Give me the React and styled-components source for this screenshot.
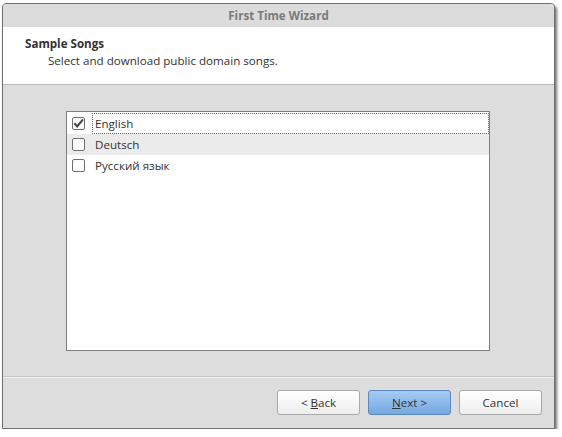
import React, { useState } from "react";
import styled, { createGlobalStyle } from "styled-components";

const Global = createGlobalStyle`
  body {
    margin: 0;
    background: #ffffff;
    font-family: "Open Sans", "DejaVu Sans", sans-serif;
  }
`;

const Window = styled.div`
  margin: 3px 0 0 2px;
  width: 553px;
  height: 426px;
  box-sizing: border-box;
  border: 1px solid #6f6f6f;
  border-radius: 4px 4px 0 0;
  box-shadow: 2px 3px 3px rgba(0, 0, 0, 0.55);
  background: #dddddd;
  display: flex;
  flex-direction: column;
  overflow: hidden;
`;

const TitleBar = styled.div`
  height: 23px;
  flex-shrink: 0;
  background: #dcdcdc;
  display: flex;
  align-items: center;
  justify-content: center;
  color: #7a7a7a;
  font-weight: bold;
  font-size: 11.6px;
`;

const Header = styled.div`
  height: 58px;
  flex-shrink: 0;
  background: #ffffff;
  border-bottom: 1px solid #b9b9b9;
  padding: 9px 0 0 22px;
  box-sizing: border-box;
  color: #333;
  font-size: 11.6px;
`;

const HeaderTitle = styled.div`
  font-weight: bold;
  line-height: 16px;
`;

const HeaderSub = styled.div`
  padding-left: 23px;
  line-height: 17px;
`;

const Body = styled.div`
  flex: 1;
  padding: 26px 64px 25px 63px;
  border-bottom: 1px solid #c6c6c6;
  box-shadow: 0 1px 0 #f2f2f2;
  display: flex;
`;

const ListBox = styled.div`
  flex: 1;
  background: #ffffff;
  border: 1px solid #7f7f7f;
  padding-top: 1px;
`;

const Row = styled.div`
  height: 21px;
  display: flex;
  align-items: center;
  background: ${(p) => (p.$alt ? "#ebebeb" : "#ffffff")};
  font-size: 11.6px;
  color: #333;
`;

const Box = styled.span`
  width: 13px;
  height: 13px;
  margin: 0 7px 0 5px;
  box-sizing: border-box;
  border: 1px solid #6f6f6f;
  border-radius: 2px;
  background: #fff;
  display: flex;
  align-items: center;
  justify-content: center;
  flex-shrink: 0;
`;

const Label = styled.span`
  flex: 1;
  height: 100%;
  display: flex;
  align-items: center;
  padding-left: 2px;
  box-sizing: border-box;
  border: 1px dotted ${(p) => (p.$focus ? "#666" : "transparent")};
`;

const Footer = styled.div`
  height: 51px;
  flex-shrink: 0;
  display: flex;
  align-items: center;
  justify-content: flex-end;
  gap: 8px;
  padding-right: 12px;
`;

const Button = styled.button`
  width: 83px;
  height: 25px;
  box-sizing: border-box;
  border-radius: 3px;
  border: 1px solid ${(p) => (p.$primary ? "#5b88bd" : "#a9a9a9")};
  background: ${(p) =>
    p.$primary
      ? "linear-gradient(#a6caf2, #74a9e3)"
      : "linear-gradient(#ffffff, #eeeeee)"};
  font-family: "Open Sans", "DejaVu Sans", sans-serif;
  font-size: 11.6px;
  color: #333;
  padding: 0;
  u {
    text-decoration: underline;
  }
`;

function Check() {
  return (
    <svg width="11" height="11" viewBox="0 0 11 11">
      <path d="M1.3 5.3 L4.2 8.4 L10 1.4" fill="none" stroke="#444" strokeWidth="2" />
    </svg>
  );
}

const songs = ["English", "Deutsch", "Русский язык"];

export default function App() {
  const [checked, setChecked] = useState([true, false, false]);
  return (
    <>
      <Global />
      <Window>
        <TitleBar>First Time Wizard</TitleBar>
        <Header>
          <HeaderTitle>Sample Songs</HeaderTitle>
          <HeaderSub>Select and download public domain songs.</HeaderSub>
        </Header>
        <Body>
          <ListBox>
            {songs.map((s, i) => (
              <Row
                key={s}
                $alt={i % 2 === 1}
                onClick={() => setChecked((c) => c.map((v, j) => (j === i ? !v : v)))}
              >
                <Box>{checked[i] && <Check />}</Box>
                <Label $focus={i === 0}>{s}</Label>
              </Row>
            ))}
          </ListBox>
        </Body>
        <Footer>
          <Button>
            &lt; <u>B</u>ack
          </Button>
          <Button $primary>
            <u>N</u>ext &gt;
          </Button>
          <Button>Cancel</Button>
        </Footer>
      </Window>
    </>
  );
}
